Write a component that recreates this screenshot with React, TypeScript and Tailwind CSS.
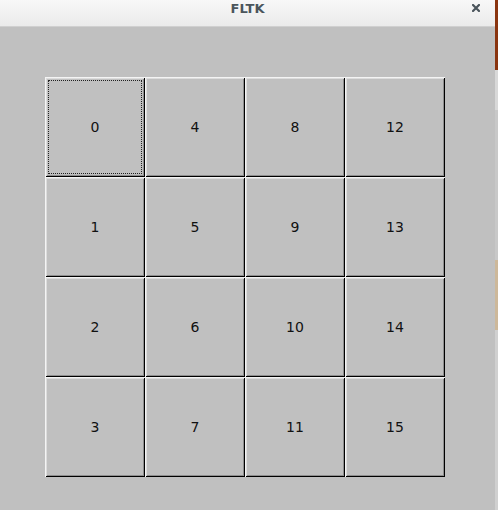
import React from 'react';

// button numbers go down columns first, like the FLTK test
const ROWS = [0, 1, 2, 3];
const COLS = [0, 1, 2, 3];

function Cell({ n, focused }: { n: number; focused: boolean }) {
  return (
    <div className="relative flex h-[100px] w-[100px] items-center justify-center bg-[#c0c0c0] shadow-[inset_1px_1px_0_#f4f4f4,inset_-1px_-1px_0_#000,inset_2px_2px_0_#dcdcdc,inset_-2px_-2px_0_#8e8e8e]">
      {focused && (
        <div className="absolute inset-[3px] border border-dotted border-[#222]" />
      )}
      <span className="text-[14px] leading-none text-[#111]">{n}</span>
    </div>
  );
}

export default function App() {
  return (
    <div
      className="flex h-[510px] w-[498px] overflow-hidden bg-[#c0c0c0]"
      style={{ fontFamily: '"DejaVu Sans", sans-serif' }}
    >
      <div className="flex w-[495px] flex-col">
        {/* title bar */}
        <div className="relative flex h-[27px] items-start justify-center border-b border-[#d0d0d0] bg-gradient-to-b from-[#f8f8f8] to-[#ebebeb] pt-[1px]">
          <span className="text-[13px] font-bold leading-[15px] text-[#4b555c]">FLTK</span>
          <svg
            className="absolute left-[472px] top-[4px]"
            width="8"
            height="8"
            viewBox="0 0 8 8"
          >
            <path d="M1 1 L7 7 M7 1 L1 7" stroke="#4b555c" strokeWidth="2.2" strokeLinecap="square" />
          </svg>
        </div>

        {/* window body */}
        <div className="flex-1 bg-[#c0c0c0] pl-[45px] pt-[50px]">
          <div className="grid w-[400px] grid-cols-4">
            {ROWS.map((r) =>
              COLS.map((c) => {
                const n = c * 4 + r;
                return <Cell key={n} n={n} focused={n === 0} />;
              })
            )}
          </div>
        </div>
      </div>

      {/* bit of desktop showing past the window */}
      <div className="flex w-[3px] flex-col">
        <div className="h-[70px] bg-[#8a3510]" />
        <div className="h-[40px] bg-[#d8d8d8]" />
        <div className="h-[150px] bg-[#c8c8c8]" />
        <div className="h-[70px] bg-[#cdb89a]" />
        <div className="flex-1 bg-[#d0d0d0]" />
      </div>
    </div>
  );
}
